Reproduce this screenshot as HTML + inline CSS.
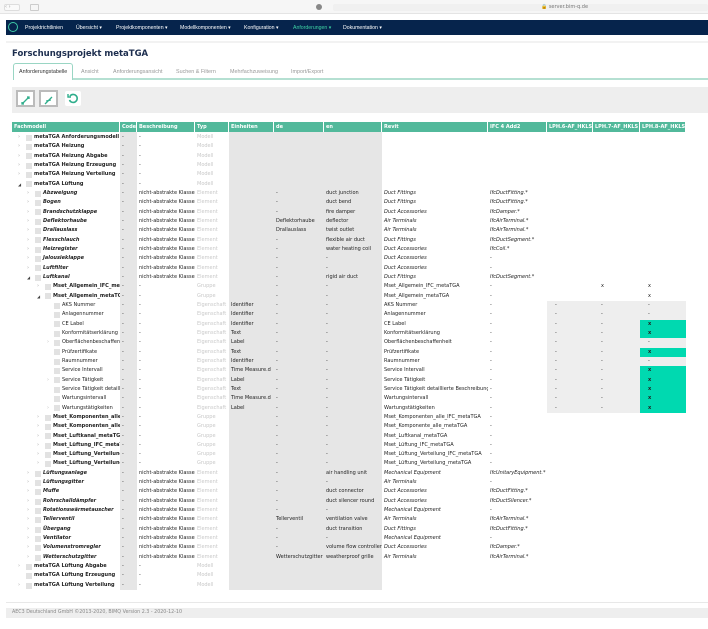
<!DOCTYPE html>
<html><head><meta charset="utf-8"><style>
*{margin:0;padding:0;box-sizing:border-box}
body{width:708px;height:629px;overflow:hidden;background:#fff;font-family:"DejaVu Sans","Liberation Sans",sans-serif;position:relative;color:#222}
.abs{position:absolute}
.nav span{position:absolute;top:4.5px;font-size:5.2px;color:#fff;font-family:"Liberation Sans",sans-serif;white-space:nowrap}
.tab{position:absolute;top:69px;font-size:5.4px;color:#999;font-family:"Liberation Sans",sans-serif}
.btn{position:absolute;top:90px;width:19px;height:17px;border:2px solid #bbb;background:#fff}
#tbl{position:absolute;left:12px;top:122px;width:674px}
.hd{display:flex;height:10px;line-height:10px}
.hd span{background:#52b99b;color:#fff;font-weight:bold;font-size:5px;padding-left:2px;border-right:1px solid #fff;flex:none;overflow:hidden;white-space:nowrap}
.r{display:flex;height:9.333px;line-height:9.333px;font-size:5px;position:relative}
.r>span{flex:none;overflow:hidden;white-space:nowrap;padding-left:2px}
.hd span:nth-child(1),.r>span:nth-child(1){width:108px}
.hd span:nth-child(2),.r>span:nth-child(2){width:17px}
.hd span:nth-child(3),.r>span:nth-child(3){width:58px}
.hd span:nth-child(4),.r>span:nth-child(4){width:34px}
.hd span:nth-child(5),.r>span:nth-child(5){width:45px}
.hd span:nth-child(6),.r>span:nth-child(6){width:50px}
.hd span:nth-child(7),.r>span:nth-child(7){width:58px}
.hd span:nth-child(8),.r>span:nth-child(8){width:106px}
.hd span:nth-child(9),.r>span:nth-child(9){width:59px}
.hd span:nth-child(10),.r>span:nth-child(10){width:46px}
.hd span:nth-child(11),.r>span:nth-child(11){width:47px}
.hd span:nth-child(12),.r>span:nth-child(12){width:46px}
.r>span:nth-child(4){color:#c8c8c8}
.r>span:nth-child(10),.r>span:nth-child(11),.r>span:nth-child(12){padding-left:8px}
.f{position:relative}
.f i{position:absolute;top:0;font-style:normal;color:#bbb;font-size:5px}
.f i.x{color:#444;font-size:4px}
.f b.c{position:absolute;top:1.8px;width:6px;height:6px;background:#e2e2e2}
.l0{padding-left:22px!important}.l0 i{left:6px}.l0 b.c{left:14px}
.l1{padding-left:31px!important}.l1 i{left:15px}.l1 b.c{left:23px}
.l2{padding-left:41px!important}.l2 i{left:25px}.l2 b.c{left:33px}
.l3{padding-left:50px!important}.l3 i{left:35px}.l3 b.c{left:42px}
.m{font-weight:bold}.e{font-weight:bold;font-style:italic}.g{font-weight:bold}
.it{font-style:italic}
.t{background:#00d9b0;font-weight:bold}
</style></head><body>
<div class="abs" style="left:0;top:0;width:708px;height:14px;background:#f6f6f6;border-bottom:1px solid #e4e4e4"></div>
<div class="abs" style="left:4px;top:4px;width:16px;height:7px;border:1px solid #ddd;border-radius:2px;background:#fafafa;font-size:5px;color:#999;line-height:5px">&lsaquo; &rsaquo;</div>
<div class="abs" style="left:30px;top:4px;width:9px;height:7px;border:1px solid #ccc;border-radius:1px"></div>
<div class="abs" style="left:316px;top:4px;width:6px;height:6px;border-radius:50%;background:#888"></div>
<div class="abs" style="left:333px;top:4px;width:375px;height:7px;background:#f0f0f0;border-radius:2px"></div>
<div class="abs" style="left:541px;top:4px;font-size:5px;color:#777">&#128274; server.bim-q.de</div>
<div class="abs nav" style="left:6px;top:20px;width:702px;height:15px;background:#06244c">
<div class="abs" style="left:2px;top:2px;width:10px;height:10px;border:1.5px solid #3ec9a7;border-radius:50%"></div>
<span style="left:19px">Projektrichtlinien</span><span style="left:70px">Übersicht ▾</span><span style="left:110px">Projektkomponenten ▾</span><span style="left:174px">Modellkomponenten ▾</span><span style="left:238px">Konfiguration ▾</span><span style="left:287px;color:#3ed3a5">Anforderungen ▾</span><span style="left:337px">Dokumentation ▾</span>
</div>
<div class="abs" style="left:6px;top:41px;width:702px;height:2px;background:#f2f2f2"></div>
<div class="abs" style="left:12px;top:49px;font-size:8.5px;font-weight:bold;color:#1c2d4e">Forschungsprojekt metaTGA</div>
<div class="abs" style="left:13px;top:63px;width:60px;height:17px;border:1px solid #9ad6c4;border-bottom:none;border-radius:3px 3px 0 0;background:#fff"></div>
<div class="abs" style="left:73px;top:78px;width:635px;height:2px;background:#b5e0d2"></div>
<div class="tab" style="left:19px;color:#333">Anforderungstabelle</div>
<div class="tab" style="left:81px">Ansicht</div>
<div class="tab" style="left:113px">Anforderungsansicht</div>
<div class="tab" style="left:176px">Suchen &amp; Filtern</div>
<div class="tab" style="left:230px">Mehrfachzuweisung</div>
<div class="tab" style="left:291px">Import/Export</div>
<div class="abs" style="left:12px;top:87px;width:696px;height:26px;background:#eee"></div>
<div class="btn" style="left:16px"><svg width="15" height="13" viewBox="0 0 15 13"><path d="M4 10L11 3M9 3h2v2M4 8v2h2" stroke="#2fae8c" stroke-width="1.3" fill="none"/></svg></div>
<div class="btn" style="left:39px"><svg width="15" height="13" viewBox="0 0 15 13"><path d="M4 10L11 3M6 6v1h1M8 6h1v1" stroke="#2fae8c" stroke-width="1.3" fill="none"/></svg></div>
<div class="abs" style="left:65px;top:91px;width:16px;height:15px;background:#fff;border-radius:2px"><svg width="16" height="15" viewBox="0 0 16 15"><path d="M5 5A4 4 0 1 1 4.5 9" stroke="#2fae8c" stroke-width="1.6" fill="none"/><path d="M3 3v3h3" stroke="#2fae8c" stroke-width="1.4" fill="none"/></svg></div>

<div class="abs" style="left:120px;top:132px;width:17px;height:458px;background:#e6e6e6"></div>
<div class="abs" style="left:229px;top:132px;width:153px;height:458px;background:#e6e6e6"></div>
<div class="abs" style="left:547px;top:301px;width:139px;height:112px;background:#eee"></div>
<div id="tbl">
<div class="hd"><span>Fachmodell</span><span>Code</span><span>Beschreibung</span><span>Typ</span><span>Einheiten</span><span>de</span><span>en</span><span>Revit</span><span>IFC 4 Add2</span><span>LPH.6-AF_HKLS</span><span>LPH.7-AF_HKLS</span><span>LPH.8-AF_HKLS</span></div>
<div style="height:1px"></div>
<div class="r"><span class="f l0 m"><i>›</i><b class="c"></b>metaTGA Anforderungsmodell</span><span>-</span><span>-</span><span>Modell</span><span></span><span></span><span></span><span></span><span></span><span></span><span></span><span></span></div>
<div class="r"><span class="f l0 m"><i>›</i><b class="c"></b>metaTGA Heizung</span><span>-</span><span>-</span><span>Modell</span><span></span><span></span><span></span><span></span><span></span><span></span><span></span><span></span></div>
<div class="r"><span class="f l0 m"><i>›</i><b class="c"></b>metaTGA Heizung Abgabe</span><span>-</span><span>-</span><span>Modell</span><span></span><span></span><span></span><span></span><span></span><span></span><span></span><span></span></div>
<div class="r"><span class="f l0 m"><i>›</i><b class="c"></b>metaTGA Heizung Erzeugung</span><span>-</span><span>-</span><span>Modell</span><span></span><span></span><span></span><span></span><span></span><span></span><span></span><span></span></div>
<div class="r"><span class="f l0 m"><i>›</i><b class="c"></b>metaTGA Heizung Verteilung</span><span>-</span><span>-</span><span>Modell</span><span></span><span></span><span></span><span></span><span></span><span></span><span></span><span></span></div>
<div class="r"><span class="f l0 m"><i class="x">◢</i><b class="c"></b>metaTGA Lüftung</span><span>-</span><span>-</span><span>Modell</span><span></span><span></span><span></span><span></span><span></span><span></span><span></span><span></span></div>
<div class="r"><span class="f l1 e"><i>›</i><b class="c"></b>Abzweigung</span><span>-</span><span>nicht-abstrakte Klasse</span><span>Element</span><span></span><span>-</span><span>duct junction</span><span class="it">Duct Fittings</span><span class="it">IfcDuctFitting.*</span><span></span><span></span><span></span></div>
<div class="r"><span class="f l1 e"><i>›</i><b class="c"></b>Bogen</span><span>-</span><span>nicht-abstrakte Klasse</span><span>Element</span><span></span><span>-</span><span>duct bend</span><span class="it">Duct Fittings</span><span class="it">IfcDuctFitting.*</span><span></span><span></span><span></span></div>
<div class="r"><span class="f l1 e"><i>›</i><b class="c"></b>Brandschutzklappe</span><span>-</span><span>nicht-abstrakte Klasse</span><span>Element</span><span></span><span>-</span><span>fire damper</span><span class="it">Duct Accessories</span><span class="it">IfcDamper.*</span><span></span><span></span><span></span></div>
<div class="r"><span class="f l1 e"><i>›</i><b class="c"></b>Deflektorhaube</span><span>-</span><span>nicht-abstrakte Klasse</span><span>Element</span><span></span><span>Deflektorhaube</span><span>deflector</span><span class="it">Air Terminals</span><span class="it">IfcAirTerminal.*</span><span></span><span></span><span></span></div>
<div class="r"><span class="f l1 e"><i>›</i><b class="c"></b>Drallauslass</span><span>-</span><span>nicht-abstrakte Klasse</span><span>Element</span><span></span><span>Drallauslass</span><span>twist outlet</span><span class="it">Air Terminals</span><span class="it">IfcAirTerminal.*</span><span></span><span></span><span></span></div>
<div class="r"><span class="f l1 e"><i>›</i><b class="c"></b>Flexschlauch</span><span>-</span><span>nicht-abstrakte Klasse</span><span>Element</span><span></span><span>-</span><span>flexible air duct</span><span class="it">Duct Fittings</span><span class="it">IfcDuctSegment.*</span><span></span><span></span><span></span></div>
<div class="r"><span class="f l1 e"><i>›</i><b class="c"></b>Heizregister</span><span>-</span><span>nicht-abstrakte Klasse</span><span>Element</span><span></span><span>-</span><span>water heating coil</span><span class="it">Duct Accessories</span><span class="it">IfcCoil.*</span><span></span><span></span><span></span></div>
<div class="r"><span class="f l1 e"><i>›</i><b class="c"></b>Jalousieklappe</span><span>-</span><span>nicht-abstrakte Klasse</span><span>Element</span><span></span><span>-</span><span>-</span><span class="it">Duct Accessories</span><span>-</span><span></span><span></span><span></span></div>
<div class="r"><span class="f l1 e"><i>›</i><b class="c"></b>Luftfilter</span><span>-</span><span>nicht-abstrakte Klasse</span><span>Element</span><span></span><span>-</span><span>-</span><span class="it">Duct Accessories</span><span>-</span><span></span><span></span><span></span></div>
<div class="r"><span class="f l1 e"><i class="x">◢</i><b class="c"></b>Luftkanal</span><span>-</span><span>nicht-abstrakte Klasse</span><span>Element</span><span></span><span>-</span><span>rigid air duct</span><span class="it">Duct Fittings</span><span class="it">IfcDuctSegment.*</span><span></span><span></span><span></span></div>
<div class="r"><span class="f l2 g"><i>›</i><b class="c"></b>Mset_Allgemein_IFC_metaTGA</span><span>-</span><span>-</span><span>Gruppe</span><span></span><span>-</span><span>-</span><span>Mset_Allgemein_IFC_metaTGA</span><span>-</span><span></span><span>x</span><span>x</span></div>
<div class="r"><span class="f l2 g"><i class="x">◢</i><b class="c"></b>Mset_Allgemein_metaTGA</span><span>-</span><span>-</span><span>Gruppe</span><span></span><span>-</span><span>-</span><span>Mset_Allgemein_metaTGA</span><span>-</span><span></span><span></span><span>x</span></div>
<div class="r"><span class="f l3"><b class="c"></b>AKS Nummer</span><span>-</span><span>-</span><span>Eigenschaft</span><span>Identifier</span><span>-</span><span>-</span><span>AKS Nummer</span><span>-</span><span>-</span><span>-</span><span>-</span></div>
<div class="r"><span class="f l3"><b class="c"></b>Anlagennummer</span><span>-</span><span>-</span><span>Eigenschaft</span><span>Identifier</span><span>-</span><span>-</span><span>Anlagennummer</span><span>-</span><span>-</span><span>-</span><span>-</span></div>
<div class="r"><span class="f l3"><b class="c"></b>CE Label</span><span>-</span><span>-</span><span>Eigenschaft</span><span>Identifier</span><span>-</span><span>-</span><span>CE Label</span><span>-</span><span>-</span><span>-</span><span class="t">x</span></div>
<div class="r"><span class="f l3"><b class="c"></b>Konformitätserklärung</span><span>-</span><span>-</span><span>Eigenschaft</span><span>Text</span><span>-</span><span>-</span><span>Konformitätserklärung</span><span>-</span><span>-</span><span>-</span><span class="t">x</span></div>
<div class="r"><span class="f l3"><i>›</i><b class="c"></b>Oberflächenbeschaffenheit</span><span>-</span><span>-</span><span>Eigenschaft</span><span>Label</span><span>-</span><span>-</span><span>Oberflächenbeschaffenheit</span><span>-</span><span>-</span><span>-</span><span>-</span></div>
<div class="r"><span class="f l3"><b class="c"></b>Prüfzertifikate</span><span>-</span><span>-</span><span>Eigenschaft</span><span>Text</span><span>-</span><span>-</span><span>Prüfzertifikate</span><span>-</span><span>-</span><span>-</span><span class="t">x</span></div>
<div class="r"><span class="f l3"><b class="c"></b>Raumnummer</span><span>-</span><span>-</span><span>Eigenschaft</span><span>Identifier</span><span>-</span><span>-</span><span>Raumnummer</span><span>-</span><span>-</span><span>-</span><span>-</span></div>
<div class="r"><span class="f l3"><b class="c"></b>Service Intervall</span><span>-</span><span>-</span><span>Eigenschaft</span><span>Time Measure.d</span><span>-</span><span>-</span><span>Service Intervall</span><span>-</span><span>-</span><span>-</span><span class="t">x</span></div>
<div class="r"><span class="f l3"><i>›</i><b class="c"></b>Service Tätigkeit</span><span>-</span><span>-</span><span>Eigenschaft</span><span>Label</span><span>-</span><span>-</span><span>Service Tätigkeit</span><span>-</span><span>-</span><span>-</span><span class="t">x</span></div>
<div class="r"><span class="f l3"><b class="c"></b>Service Tätigkeit detaillierte</span><span>-</span><span>-</span><span>Eigenschaft</span><span>Text</span><span>-</span><span>-</span><span>Service Tätigkeit detaillierte Beschreibung</span><span>-</span><span>-</span><span>-</span><span class="t">x</span></div>
<div class="r"><span class="f l3"><b class="c"></b>Wartungsintervall</span><span>-</span><span>-</span><span>Eigenschaft</span><span>Time Measure.d</span><span>-</span><span>-</span><span>Wartungsintervall</span><span>-</span><span>-</span><span>-</span><span class="t">x</span></div>
<div class="r"><span class="f l3"><i>›</i><b class="c"></b>Wartungstätigkeiten</span><span>-</span><span>-</span><span>Eigenschaft</span><span>Label</span><span>-</span><span>-</span><span>Wartungstätigkeiten</span><span>-</span><span>-</span><span>-</span><span class="t">x</span></div>
<div class="r"><span class="f l2 g"><i>›</i><b class="c"></b>Mset_Komponenten_alle_IFC</span><span>-</span><span>-</span><span>Gruppe</span><span></span><span>-</span><span>-</span><span>Mset_Komponenten_alle_IFC_metaTGA</span><span>-</span><span></span><span></span><span></span></div>
<div class="r"><span class="f l2 g"><i>›</i><b class="c"></b>Mset_Komponenten_alle_metaTGA</span><span>-</span><span>-</span><span>Gruppe</span><span></span><span>-</span><span>-</span><span>Mset_Komponente_alle_metaTGA</span><span>-</span><span></span><span></span><span></span></div>
<div class="r"><span class="f l2 g"><i>›</i><b class="c"></b>Mset_Luftkanal_metaTGA</span><span>-</span><span>-</span><span>Gruppe</span><span></span><span>-</span><span>-</span><span>Mset_Luftkanal_metaTGA</span><span>-</span><span></span><span></span><span></span></div>
<div class="r"><span class="f l2 g"><i>›</i><b class="c"></b>Mset_Lüftung_IFC_metaTGA</span><span>-</span><span>-</span><span>Gruppe</span><span></span><span>-</span><span>-</span><span>Mset_Lüftung_IFC_metaTGA</span><span>-</span><span></span><span></span><span></span></div>
<div class="r"><span class="f l2 g"><i>›</i><b class="c"></b>Mset_Lüftung_Verteilung_IFC</span><span>-</span><span>-</span><span>Gruppe</span><span></span><span>-</span><span>-</span><span>Mset_Lüftung_Verteilung_IFC_metaTGA</span><span>-</span><span></span><span></span><span></span></div>
<div class="r"><span class="f l2 g"><i>›</i><b class="c"></b>Mset_Lüftung_Verteilung</span><span>-</span><span>-</span><span>Gruppe</span><span></span><span>-</span><span>-</span><span>Mset_Lüftung_Verteilung_metaTGA</span><span>-</span><span></span><span></span><span></span></div>
<div class="r"><span class="f l1 e"><i>›</i><b class="c"></b>Lüftungsanlage</span><span>-</span><span>nicht-abstrakte Klasse</span><span>Element</span><span></span><span>-</span><span>air handling unit</span><span class="it">Mechanical Equipment</span><span class="it">IfcUnitaryEquipment.*</span><span></span><span></span><span></span></div>
<div class="r"><span class="f l1 e"><i>›</i><b class="c"></b>Lüftungsgitter</span><span>-</span><span>nicht-abstrakte Klasse</span><span>Element</span><span></span><span>-</span><span>-</span><span class="it">Air Terminals</span><span>-</span><span></span><span></span><span></span></div>
<div class="r"><span class="f l1 e"><i>›</i><b class="c"></b>Muffe</span><span>-</span><span>nicht-abstrakte Klasse</span><span>Element</span><span></span><span>-</span><span>duct connector</span><span class="it">Duct Accessories</span><span class="it">IfcDuctFitting.*</span><span></span><span></span><span></span></div>
<div class="r"><span class="f l1 e"><i>›</i><b class="c"></b>Rohrschalldämpfer</span><span>-</span><span>nicht-abstrakte Klasse</span><span>Element</span><span></span><span>-</span><span>duct silencer round</span><span class="it">Duct Accessories</span><span class="it">IfcDuctSilencer.*</span><span></span><span></span><span></span></div>
<div class="r"><span class="f l1 e"><i>›</i><b class="c"></b>Rotationswärmetauscher</span><span>-</span><span>nicht-abstrakte Klasse</span><span>Element</span><span></span><span>-</span><span>-</span><span class="it">Mechanical Equipment</span><span>-</span><span></span><span></span><span></span></div>
<div class="r"><span class="f l1 e"><i>›</i><b class="c"></b>Tellerventil</span><span>-</span><span>nicht-abstrakte Klasse</span><span>Element</span><span></span><span>Tellerventil</span><span>ventilation valve</span><span class="it">Air Terminals</span><span class="it">IfcAirTerminal.*</span><span></span><span></span><span></span></div>
<div class="r"><span class="f l1 e"><i>›</i><b class="c"></b>Übergang</span><span>-</span><span>nicht-abstrakte Klasse</span><span>Element</span><span></span><span>-</span><span>duct transition</span><span class="it">Duct Fittings</span><span class="it">IfcDuctFitting.*</span><span></span><span></span><span></span></div>
<div class="r"><span class="f l1 e"><i>›</i><b class="c"></b>Ventilator</span><span>-</span><span>nicht-abstrakte Klasse</span><span>Element</span><span></span><span>-</span><span>-</span><span class="it">Mechanical Equipment</span><span>-</span><span></span><span></span><span></span></div>
<div class="r"><span class="f l1 e"><i>›</i><b class="c"></b>Volumenstromregler</span><span>-</span><span>nicht-abstrakte Klasse</span><span>Element</span><span></span><span>-</span><span>volume flow controller</span><span class="it">Duct Accessories</span><span class="it">IfcDamper.*</span><span></span><span></span><span></span></div>
<div class="r"><span class="f l1 e"><i>›</i><b class="c"></b>Wetterschutzgitter</span><span>-</span><span>nicht-abstrakte Klasse</span><span>Element</span><span></span><span>Wetterschutzgitter</span><span>weatherproof grille</span><span class="it">Air Terminals</span><span class="it">IfcAirTerminal.*</span><span></span><span></span><span></span></div>
<div class="r"><span class="f l0 m"><i>›</i><b class="c"></b>metaTGA Lüftung Abgabe</span><span>-</span><span>-</span><span>Modell</span><span></span><span></span><span></span><span></span><span></span><span></span><span></span><span></span></div>
<div class="r"><span class="f l0 m"><b class="c"></b>metaTGA Lüftung Erzeugung</span><span>-</span><span>-</span><span>Modell</span><span></span><span></span><span></span><span></span><span></span><span></span><span></span><span></span></div>
<div class="r"><span class="f l0 m"><i>›</i><b class="c"></b>metaTGA Lüftung Verteilung</span><span>-</span><span>-</span><span>Modell</span><span></span><span></span><span></span><span></span><span></span><span></span><span></span><span></span></div>
</div>
<div class="abs" style="left:6px;top:602px;width:702px;height:1px;background:#e8e8e8"></div>
<div class="abs" style="left:6px;top:608px;width:702px;height:10px;background:#eee"></div>
<div class="abs" style="left:12px;top:610px;font-size:4.8px;color:#888">AEC3 Deutschland GmbH ©2013-2020, BIMQ Version 2.3 - 2020-12-10</div>
</body></html>
